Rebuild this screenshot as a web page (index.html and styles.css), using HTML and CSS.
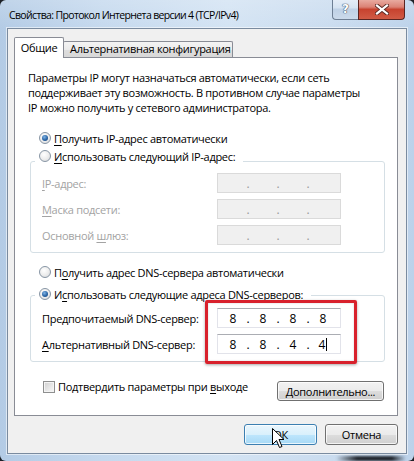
FILE: index.html
```html
<!DOCTYPE html>
<html lang="ru">
<head>
<meta charset="utf-8">
<title>Свойства: Протокол Интернета версии 4 (TCP/IPv4)</title>
<link rel="stylesheet" href="styles.css">
</head>
<body>
<div class="window">
  <div class="titlebar">
    <div class="title">Свойства: Протокол Интернета версии 4 (TCP/IPv4)</div>
    <div class="caption-btns">
      <div class="cbtn help">?</div>
      <div class="cbtn close">
        <svg width="14" height="11" viewBox="0 0 14 11"><path d="M2 1.5 L12 9.5 M12 1.5 L2 9.5" stroke="#5b2a25" stroke-width="4" stroke-linecap="square"/><path d="M2 1.5 L12 9.5 M12 1.5 L2 9.5" stroke="#fff" stroke-width="2.2" stroke-linecap="square"/></svg>
      </div>
    </div>
  </div>
  <div class="client">
    <div class="tabs">
      <div class="tab active">Общие</div>
      <div class="tab alt">Альтернативная конфигурация</div>
    </div>
    <div class="panel">
      <p class="desc">Параметры IP могут назначаться автоматически, если сеть<br>поддерживает эту возможность. В противном случае параметры<br>IP можно получить у сетевого администратора.</p>
      <div class="opt first"><span class="radio on"></span><span><u>П</u>олучить IP-адрес автоматически</span></div>
      <div class="group g1">
        <div class="opt legend"><span class="radio"></span><span><u>И</u>спользовать следующий IP-адрес:</span></div>
        <div class="fields">
          <span class="lbl dis"><u>I</u>P-адрес:</span>
          <div class="ip dis"><span></span><span class="dot">.</span><span></span><span class="dot">.</span><span></span><span class="dot">.</span><span></span></div>
          <span class="lbl dis"><u>М</u>аска подсети:</span>
          <div class="ip dis"><span></span><span class="dot">.</span><span></span><span class="dot">.</span><span></span><span class="dot">.</span><span></span></div>
          <span class="lbl dis">Основной <u>ш</u>люз:</span>
          <div class="ip dis"><span></span><span class="dot">.</span><span></span><span class="dot">.</span><span></span><span class="dot">.</span><span></span></div>
        </div>
      </div>
      <div class="opt dns1"><span class="radio"></span><span>П<u>о</u>лучить адрес DNS-сервера автоматически</span></div>
      <div class="group g2">
        <div class="opt legend"><span class="radio on"></span><span>И<u>с</u>пользовать следующие адреса DNS-серверов:</span></div>
        <div class="fields">
          <span class="lbl">Пре<u>д</u>почитаемый DNS-сервер:</span>
          <div class="ip"><span>8</span><span class="dot">.</span><span>8</span><span class="dot">.</span><span>8</span><span class="dot">.</span><span>8</span></div>
          <span class="lbl"><u>А</u>льтернативный DNS-сервер:</span>
          <div class="ip"><span>8</span><span class="dot">.</span><span>8</span><span class="dot">.</span><span>4</span><span class="dot">.</span><span>4<i class="caret"></i></span></div>
        </div>
      </div>
      <div class="checkrow">
        <div class="check"><span class="cb"></span><span>Подтвердить параметры при <u>в</u>ыходе</span></div>
        <div class="btn more"><span><u>Д</u>ополнительно...</span></div>
      </div>
      <div class="mark"></div>
    </div>
    <div class="dlg">
      <div class="btn ok">ОК</div>
      <div class="btn">Отмена</div>
    </div>
  </div>
  <div class="shade"></div>
  <svg class="cursor" width="14" height="21" viewBox="0 0 14 21"><path d="M0.5 0.5 L0.5 16.5 L4.5 12.5 L7.5 19.5 L10 18.5 L7 11.5 L12 11.5 Z" fill="#fff" stroke="#000" stroke-width="1" stroke-linejoin="miter"/></svg>
</div>
</body>
</html>
```

FILE: styles.css
```css
* { box-sizing: border-box; }
html, body { margin: 0; padding: 0; }
body {
  width: 414px;
  height: 461px;
  overflow: hidden;
  font-family: "Open Sans", "Noto Sans", sans-serif;
  font-size: 11px;
  letter-spacing: -0.3px;
  color: #000;
  background: #1c2026;
}
u { text-decoration: underline; text-underline-offset: 2px; text-decoration-thickness: 1px; }

.window {
  width: 414px;
  height: 461px;
  display: flex;
  flex-direction: column;
  position: relative;
  overflow: hidden;
  border-radius: 6px;
  background:
    linear-gradient(180deg, rgba(255,255,255,0.18) 0%, rgba(255,255,255,0) 30px),
    linear-gradient(90deg, #b3cbe5 0%, #c5d9ee 25%, #d3e3f3 55%, #cadcef 80%, #bcd2ea 100%);
}

.titlebar {
  height: 28px;
  flex: none;
  display: flex;
  justify-content: space-between;
  align-items: flex-start;
}
.title {
  padding: 7px 0 0 9px;
  font-size: 10.5px;
  letter-spacing: -0.65px;
  line-height: 16px;
  color: #000;
}
.caption-btns {
  display: flex;
  margin-right: 9px;
  margin-top: -1px;
}
.cbtn {
  height: 21px;
  display: flex;
  align-items: center;
  justify-content: center;
}
.help {
  width: 26px;
  border: 1px solid #6e7f94;
  border-top: none;
  border-right: none;
  border-radius: 0 0 0 4px;
  background: linear-gradient(180deg, #e6eef8 0%, #d6e3f1 45%, #bfd1e6 50%, #cbdaeb 100%);
  color: #fff;
  font-family: "DejaVu Sans", sans-serif;
  font-weight: bold;
  font-size: 12px;
  letter-spacing: 0;
  text-shadow: 0 0 1px #3f5169, 0 0 1px #3f5169, 0 0 1px #3f5169;
}
.close {
  width: 47px;
  border: 1px solid #5a2521;
  border-top: none;
  border-radius: 0 0 4px 0;
  background: linear-gradient(180deg, #eab0a6 0%, #db8275 40%, #c7432f 52%, #d15b45 100%);
}

.client {
  flex: 1;
  margin: 0 7px 7px;
  background: #f0f0f0;
  border: 1px solid #7a8b9f;
  box-shadow: 0 0 0 1px rgba(255,255,255,0.55);
  display: flex;
  flex-direction: column;
  padding: 8px 8px 8px 6px;
}

.tabs {
  height: 20px;
  flex: none;
  display: flex;
  align-items: flex-end;
  position: relative;
  z-index: 1;
}
.tab {
  height: 16px;
  border: 1px solid #898c95;
  border-bottom: none;
  line-height: 14px;
  white-space: nowrap;
}
.tab.active {
  width: 50px;
  height: 21px;
  margin-bottom: -1px;
  background: #fff;
  text-align: center;
  line-height: 19px;
  position: relative;
  z-index: 2;
  border-radius: 2px 2px 0 0;
}
.tab.alt {
  width: 170px;
  margin-left: -1px;
  padding-left: 6px;
  background: linear-gradient(180deg, #f4f4f4 0%, #ebebeb 50%, #dedede 51%, #d8d8d8 100%);
  border-radius: 2px 2px 0 0;
}

.panel {
  flex: 1;
  background: #fff;
  border: 1px solid #898c95;
  position: relative;
  padding: 12px 0 14px 0;
}
.desc {
  margin: 0 0 0 13px;
  line-height: 15px;
}

.opt {
  display: flex;
  align-items: center;
  height: 16px;
  gap: 3px;
  white-space: nowrap;
}
.opt.first { margin: 15px 0 0 24px; }
.opt.dns1 { margin: 11px 0 0 24px; }

.radio {
  width: 12px;
  height: 12px;
  flex: none;
  border-radius: 50%;
  border: 1px solid #8795a4;
  background: radial-gradient(circle at 40% 35%, #ffffff 0%, #ececec 55%, #cfd3d8 100%);
  position: relative;
}
.radio.on::after {
  content: "";
  position: absolute;
  left: 2px;
  top: 2px;
  width: 6px;
  height: 6px;
  border-radius: 50%;
  background: radial-gradient(circle at 40% 35%, #7fb4e6 0%, #2a64a4 55%, #133e74 100%);
}

.group {
  margin: 15px 12px 0 15px;
  border: 1px solid #d5dfe5;
  border-radius: 3px;
  padding: 0 0 7px 11px;
}
.legend {
  width: max-content;
  margin: -14px 0 0 -7px;
  padding: 0 8px 0 4px;
  background: #fff;
}
.g2 .legend { margin-top: -10px; }

.fields {
  display: grid;
  grid-template-columns: 175px 124px;
  row-gap: 6px;
  align-items: center;
  margin-top: 9px;
}
.g2 .fields { margin-top: 6px; }
.lbl { white-space: nowrap; }
.lbl.dis { color: #a3a3a3; }

.ip {
  height: 20px;
  border: 1px solid #e2e3ea;
  border-top-color: #abadb3;
  background: #fff;
  display: flex;
  align-items: center;
  padding-left: 4px;
  font-size: 12px;
  letter-spacing: 0;
}
.ip span {
  width: 22px;
  text-align: center;
}
.ip span.dot { width: 8px; }
.ip.dis {
  background: #f0f0f0;
  border-color: #dadada;
  color: #9a9a9a;
}
.caret {
  display: inline-block;
  width: 1px;
  height: 13px;
  background: #000;
  vertical-align: -2px;
  margin-left: 1px;
}

.checkrow {
  display: flex;
  justify-content: space-between;
  align-items: flex-start;
  margin: 17px 13px 0 28px;
}
.check {
  display: flex;
  align-items: center;
  gap: 3px;
  height: 15px;
}
.cb {
  width: 12px;
  height: 12px;
  border: 1px solid #8e8f8f;
  background: linear-gradient(135deg, #cfcfcf 0%, #e9e9e9 60%, #f7f7f7 100%);
  box-shadow: inset 0 0 0 1px #f4f4f4;
}

.btn {
  height: 21px;
  width: 73px;
  border: 1px solid #707070;
  border-radius: 3px;
  background: linear-gradient(180deg, #f2f2f2 0%, #ebebeb 50%, #dddddd 51%, #cfcfcf 100%);
  box-shadow: inset 0 0 0 1px rgba(255,255,255,0.75);
  display: flex;
  align-items: center;
  justify-content: center;
  white-space: nowrap;
}
.btn.more {
  width: 107px;
  height: 20px;
  margin-top: 2px;
}
.btn.ok {
  border-color: #3c7fb1;
  background: linear-gradient(180deg, #eaf6fd 0%, #d9f0fc 50%, #bee6fd 51%, #a7d9f5 100%);
}

.dlg {
  display: flex;
  justify-content: flex-end;
  gap: 8px;
  margin-top: 8px;
  flex: none;
}

.mark {
  position: absolute;
  left: 190px;
  top: 242px;
  width: 152px;
  height: 64px;
  border: 3px solid #d8212c;
  border-radius: 2px;
  box-shadow: 0 1px 3px rgba(0,0,0,0.35), inset 0 0 2px rgba(0,0,0,0.2);
}

.shade {
  position: absolute;
  right: 8px;
  bottom: 0;
  width: 70px;
  height: 5px;
  background: linear-gradient(90deg, rgba(20,24,30,0) 0%, rgba(20,24,30,0.9) 30%, rgba(20,24,30,0.9) 80%, rgba(20,24,30,0) 100%);
  filter: blur(1px);
}

.cursor {
  position: absolute;
  left: 272px;
  top: 428px;
}
```
